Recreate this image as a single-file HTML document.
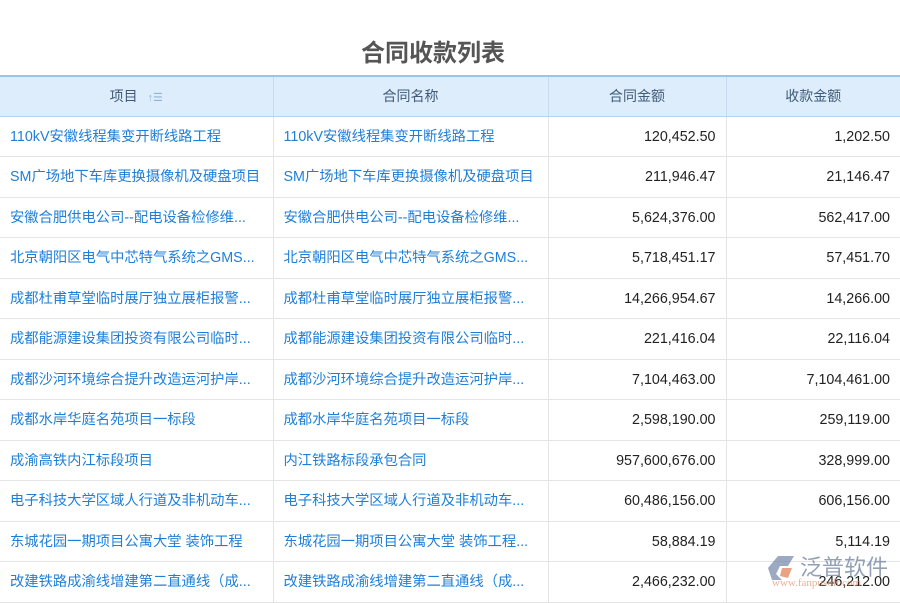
<!DOCTYPE html>
<html><head><meta charset="utf-8"><style>
*{margin:0;padding:0;box-sizing:border-box}
body{width:900px;height:600px;overflow:hidden;background:#fff;font-family:"Liberation Sans","Noto Sans CJK SC",sans-serif;position:relative}
.title{position:absolute;top:33px;left:0;width:866px;text-align:center;font-size:24px;font-weight:bold;color:#555}
table{position:absolute;top:75px;left:0;border-collapse:collapse;width:900px;table-layout:fixed}
th{height:40px;background:#deedfb;color:#3f5a78;font-weight:normal;font-size:14px;border-top:2px solid #9cc3e8;border-bottom:1px solid #b6d2ee;border-right:1px solid #c9dcef;padding-bottom:1px}
td{height:40.5px;font-size:14.3px;line-height:17px;border-bottom:1px solid #e4e4e4;border-right:1px solid #e4e4e4;padding:2px 10px 0;white-space:nowrap;overflow:hidden}
td.l{color:#1f7fd8}
td.n{text-align:right;color:#222}
th:last-child,td:last-child{border-right:none}
.wm{position:absolute;left:768px;top:550px}
</style></head><body>
<div class="title">合同收款列表</div>
<table>
<colgroup><col style="width:273px"><col style="width:275px"><col style="width:178px"><col style="width:174px"></colgroup>
<tr><th>项目 <span style="color:#8fb4d8;font-size:11px;margin-left:6px">↑☰</span></th><th>合同名称</th><th>合同金额</th><th>收款金额</th></tr>
<tr><td class="l">110kV安徽线程集变开断线路工程</td><td class="l">110kV安徽线程集变开断线路工程</td><td class="n">120,452.50</td><td class="n">1,202.50</td></tr>
<tr><td class="l">SM广场地下车库更换摄像机及硬盘项目</td><td class="l">SM广场地下车库更换摄像机及硬盘项目</td><td class="n">211,946.47</td><td class="n">21,146.47</td></tr>
<tr><td class="l">安徽合肥供电公司--配电设备检修维...</td><td class="l">安徽合肥供电公司--配电设备检修维...</td><td class="n">5,624,376.00</td><td class="n">562,417.00</td></tr>
<tr><td class="l">北京朝阳区电气中芯特气系统之GMS...</td><td class="l">北京朝阳区电气中芯特气系统之GMS...</td><td class="n">5,718,451.17</td><td class="n">57,451.70</td></tr>
<tr><td class="l">成都杜甫草堂临时展厅独立展柜报警...</td><td class="l">成都杜甫草堂临时展厅独立展柜报警...</td><td class="n">14,266,954.67</td><td class="n">14,266.00</td></tr>
<tr><td class="l">成都能源建设集团投资有限公司临时...</td><td class="l">成都能源建设集团投资有限公司临时...</td><td class="n">221,416.04</td><td class="n">22,116.04</td></tr>
<tr><td class="l">成都沙河环境综合提升改造运河护岸...</td><td class="l">成都沙河环境综合提升改造运河护岸...</td><td class="n">7,104,463.00</td><td class="n">7,104,461.00</td></tr>
<tr><td class="l">成都水岸华庭名苑项目一标段</td><td class="l">成都水岸华庭名苑项目一标段</td><td class="n">2,598,190.00</td><td class="n">259,119.00</td></tr>
<tr><td class="l">成渝高铁内江标段项目</td><td class="l">内江铁路标段承包合同</td><td class="n">957,600,676.00</td><td class="n">328,999.00</td></tr>
<tr><td class="l">电子科技大学区域人行道及非机动车...</td><td class="l">电子科技大学区域人行道及非机动车...</td><td class="n">60,486,156.00</td><td class="n">606,156.00</td></tr>
<tr><td class="l">东城花园一期项目公寓大堂 装饰工程</td><td class="l">东城花园一期项目公寓大堂 装饰工程...</td><td class="n">58,884.19</td><td class="n">5,114.19</td></tr>
<tr><td class="l">改建铁路成渝线增建第二直通线（成...</td><td class="l">改建铁路成渝线增建第二直通线（成...</td><td class="n">2,466,232.00</td><td class="n">246,212.00</td></tr>
</table>
<div class="wm">
<svg width="30" height="28" style="position:absolute;left:0;top:4px;opacity:.75"><path d="M10 2 L26 2 L20 12 L12 12 L8 20 L14 26 L4 26 L0 14 Z" fill="#7a8db0"/><path d="M14 14 L24 14 L20 24 L12 22 Z" fill="#e0855a"/></svg>
<div style="position:absolute;left:32px;top:0;font-size:22px;color:#8090aa;opacity:.85;white-space:nowrap">泛普软件</div>
<div style="position:absolute;left:4px;top:27px;font-size:11px;color:#e0906a;opacity:.7;white-space:nowrap;font-family:'Liberation Serif',serif">www.fanpusoft.com</div>
</div>
</body></html>
